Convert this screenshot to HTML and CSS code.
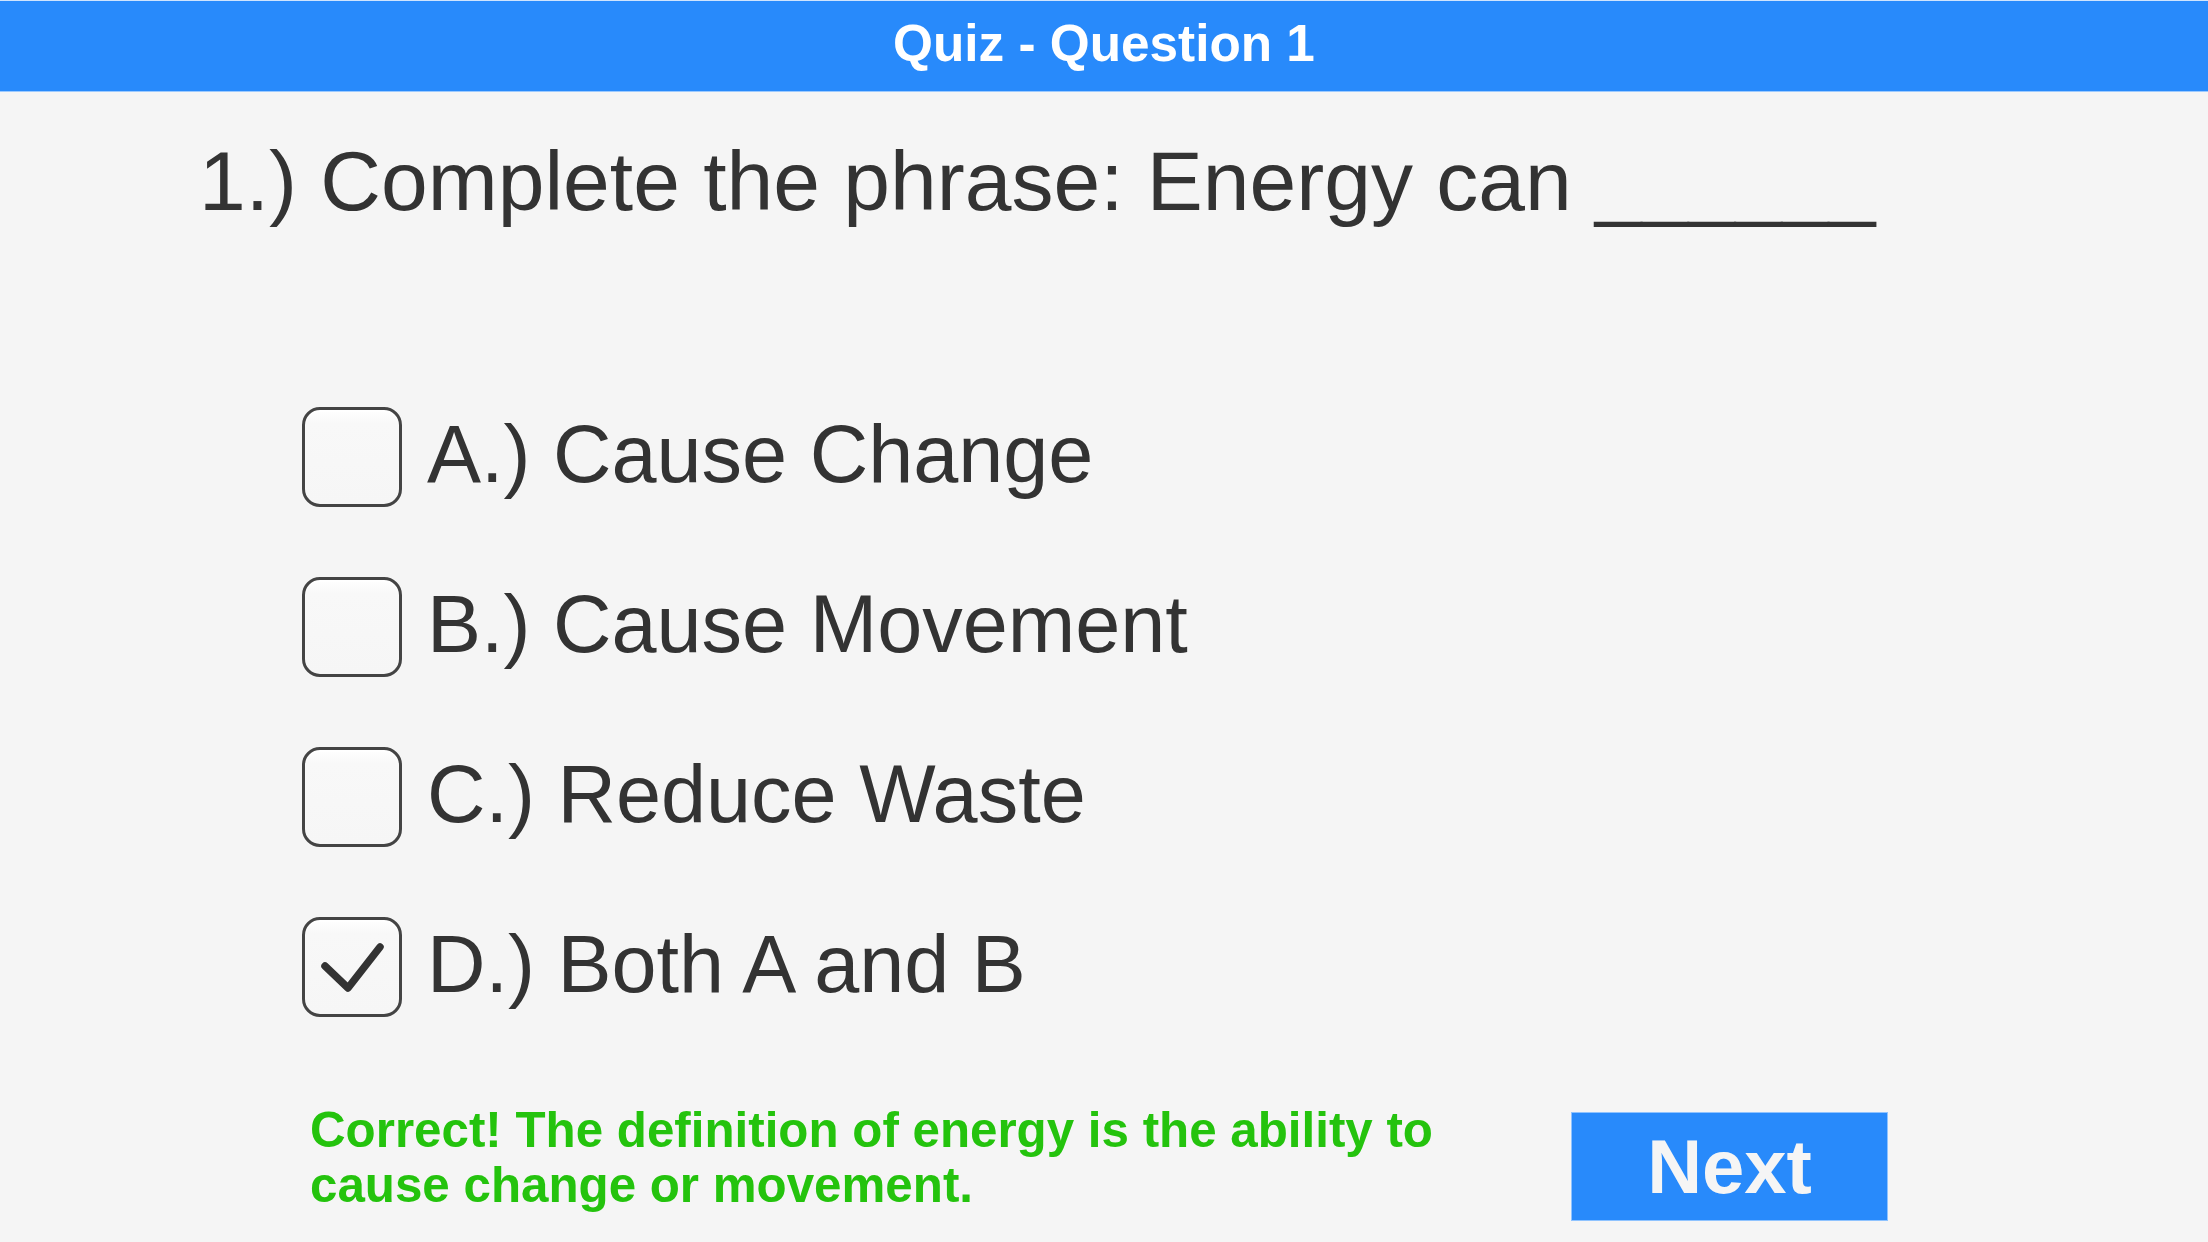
FILE: index.html
```html
<!DOCTYPE html>
<html lang="en">
<head>
<meta charset="utf-8">
<title>Quiz - Question 1</title>
<link rel="stylesheet" href="styles.css">
</head>
<body>
<header class="topbar">
  <h1 class="topbar-title">Quiz - Question 1</h1>
</header>
<main class="quiz">
  <h2 class="question">1.) Complete the phrase: Energy can ______</h2>
  <ul class="options">
    <li class="option">
      <span class="checkbox"></span>
      <span class="option-label">A.) Cause Change</span>
    </li>
    <li class="option">
      <span class="checkbox"></span>
      <span class="option-label">B.) Cause Movement</span>
    </li>
    <li class="option">
      <span class="checkbox"></span>
      <span class="option-label">C.) Reduce Waste</span>
    </li>
    <li class="option">
      <span class="checkbox checked">
        <svg class="checkmark" viewBox="0 0 100 100" width="100" height="100" aria-hidden="true">
          <polyline points="23,49 46,71 78,30" fill="none" stroke="#333" stroke-width="7.5" stroke-linecap="round" stroke-linejoin="round"/>
        </svg>
      </span>
      <span class="option-label">D.) Both A and B</span>
    </li>
  </ul>
  <div class="footer-row">
    <p class="feedback">Correct! The definition of energy is the ability to cause change or movement.</p>
    <button class="next-btn" type="button">Next</button>
  </div>
</main>
</body>
</html>
```

FILE: styles.css
```css
* {
  box-sizing: border-box;
}

html, body {
  margin: 0;
  padding: 0;
}

body {
  width: 2208px;
  height: 1242px;
  overflow: hidden;
  background: #f5f5f5;
  font-family: "Liberation Sans", Arial, sans-serif;
  color: #333333;
}

.topbar {
  background: #288afb;
  border-top: 1px solid #cfe4fd;
  border-bottom: 1px solid #9ccaff;
  padding-bottom: 4px;
  text-align: center;
}

.topbar-title {
  margin: 0;
  font-size: 51.3px;
  line-height: 86px;
  font-weight: bold;
  color: #ffffff;
}

.quiz {
  padding-left: 199px;
  padding-top: 39px;
}

.question {
  margin: 0;
  font-size: 84px;
  line-height: 100px;
  font-weight: normal;
  color: #333333;
  white-space: nowrap;
}

.options {
  list-style: none;
  margin: 176px 0 0 103px;
  padding: 0;
  display: flex;
  flex-direction: column;
  gap: 70px;
}

.option {
  display: flex;
  align-items: flex-start;
  gap: 25px;
  height: 100px;
}

.checkbox {
  flex: 0 0 100px;
  width: 100px;
  height: 100px;
  border: 3px solid #444444;
  border-radius: 18px;
  background: linear-gradient(#ffffff 0%, #f8f8f8 14%, #f6f6f6 100%);
  box-shadow: inset 0 2px 2px rgba(255, 255, 255, 0.9);
  position: relative;
}

.checkmark {
  position: absolute;
  left: -3px;
  top: -3px;
}

.option-label {
  font-size: 81px;
  line-height: 95px;
  color: #333333;
  white-space: nowrap;
}

.footer-row {
  margin: 85px 0 0 111px;
  display: grid;
  grid-template-columns: 1261px 317px;
  align-items: start;
}

.feedback {
  margin: 0;
  max-width: 1200px;
  font-size: 49.3px;
  line-height: 55px;
  font-weight: bold;
  color: #24c30d;
}

.next-btn {
  margin-top: 10px;
  width: 317px;
  height: 109px;
  border: 1px solid #8fc3ff;
  background: #288afb;
  color: #f5f5f5;
  font-family: "Liberation Sans", Arial, sans-serif;
  font-size: 76px;
  font-weight: bold;
  line-height: 1;
  padding: 0;
  cursor: pointer;
}
```
